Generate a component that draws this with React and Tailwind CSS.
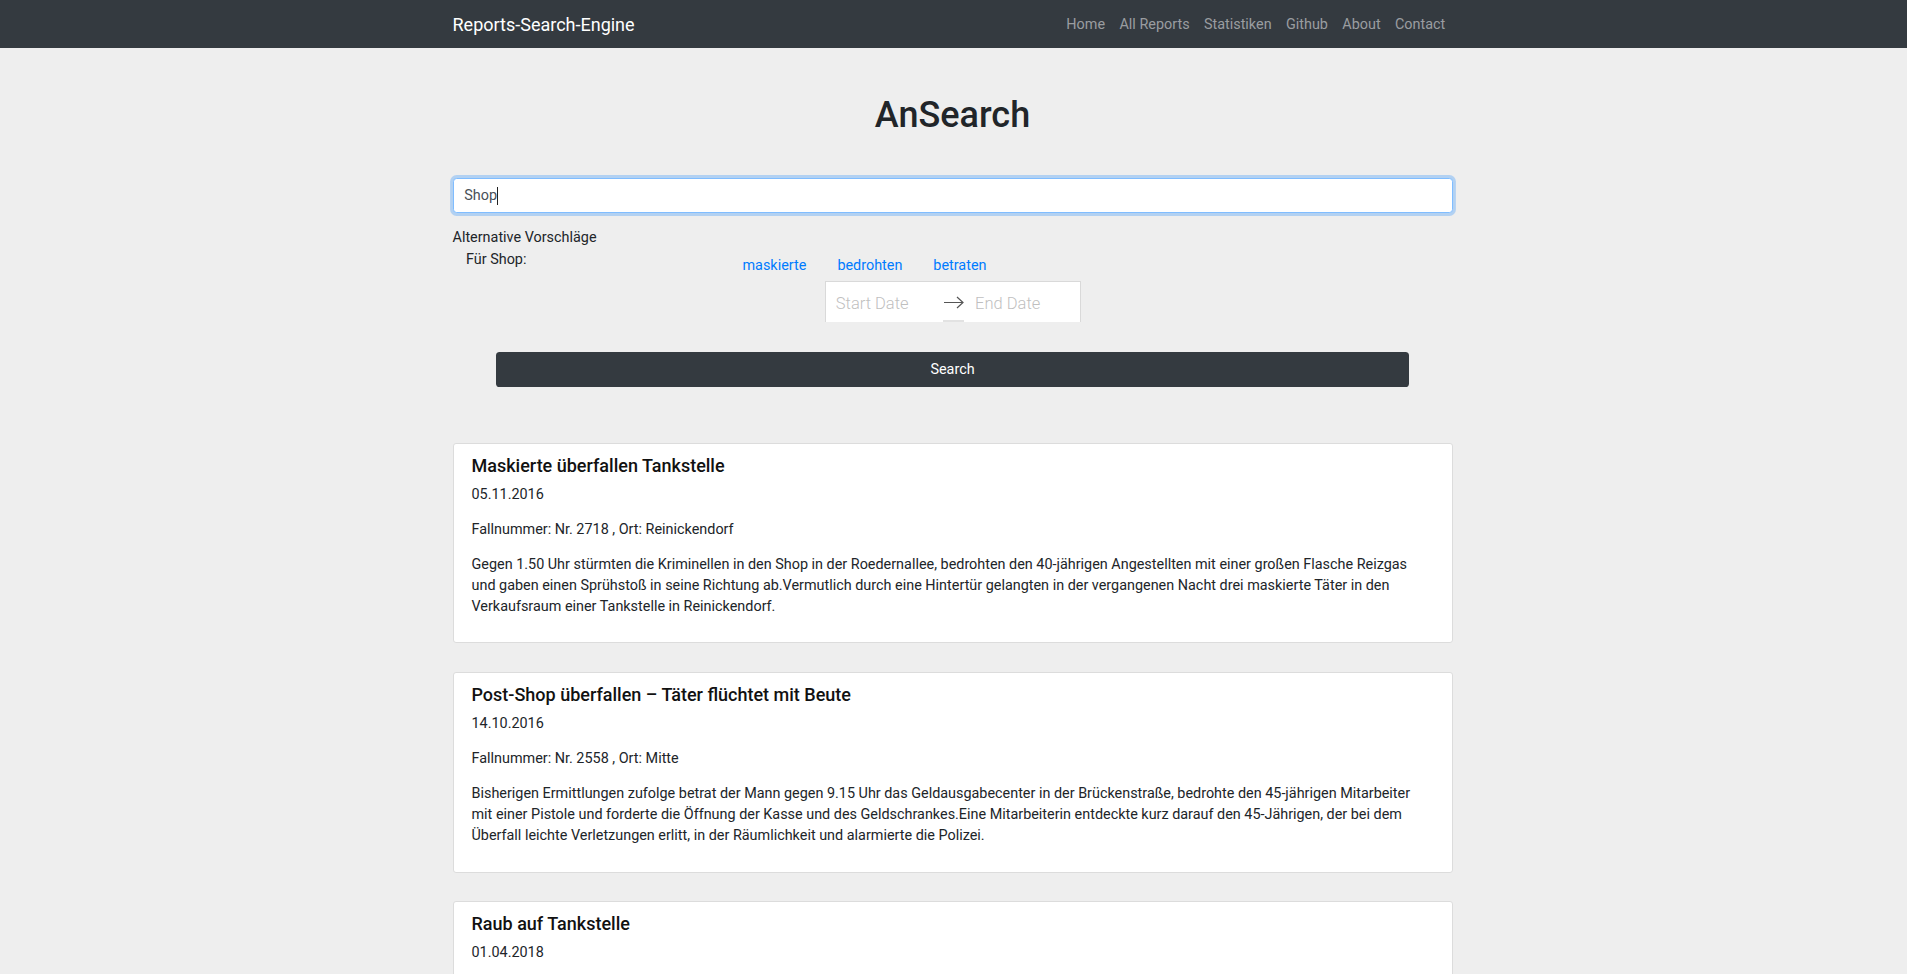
import React from "react";

const NAV_LINKS = ["Home", "All Reports", "Statistiken", "Github", "About", "Contact"];

const SUGGESTIONS = ["maskierte", "bedrohten", "betraten"];

const REPORTS = [
    {
        title: "Maskierte überfallen Tankstelle",
        date: "05.11.2016",
        meta: "Fallnummer: Nr. 2718 , Ort: Reinickendorf",
        text: "Gegen 1.50 Uhr stürmten die Kriminellen in den Shop in der Roedernallee, bedrohten den 40-jährigen Angestellten mit einer großen Flasche Reizgas und gaben einen Sprühstoß in seine Richtung ab.Vermutlich durch eine Hintertür gelangten in der vergangenen Nacht drei maskierte Täter in den Verkaufsraum einer Tankstelle in Reinickendorf."
    },
    {
        title: "Post-Shop überfallen – Täter flüchtet mit Beute",
        date: "14.10.2016",
        meta: "Fallnummer: Nr. 2558 , Ort: Mitte",
        text: "Bisherigen Ermittlungen zufolge betrat der Mann gegen 9.15 Uhr das Geldausgabecenter in der Brückenstraße, bedrohte den 45-jährigen Mitarbeiter mit einer Pistole und forderte die Öffnung der Kasse und des Geldschrankes.Eine Mitarbeiterin entdeckte kurz darauf den 45-Jährigen, der bei dem Überfall leichte Verletzungen erlitt, in der Räumlichkeit und alarmierte die Polizei."
    },
    {
        title: "Raub auf Tankstelle",
        date: "01.04.2018",
        meta: "",
        text: ""
    }
];

export default function App() {
    return (
        <div className="min-h-screen bg-[#eeeeee] text-[#212529] text-[14.4px] leading-[21.6px] font-['Roboto','Liberation_Sans',sans-serif]">

            {/* NAVBAR */}
            <nav className="h-12 bg-[#343a40]">
                <div className="w-[1002px] pr-[2px] mx-auto h-full flex items-center justify-between">
                    <a className="text-[18px] leading-normal text-white">
                        Reports-Search-Engine
                    </a>
                    <ul className="flex items-center pt-[2px]">
                        {NAV_LINKS.map(link => (
                            <li key={link} className="px-[7.2px] leading-normal text-[#9a9da0]">
                                {link}
                            </li>
                        ))}
                    </ul>
                </div>
            </nav>

            <main className="w-[1002px] pr-[2px] mx-auto pb-10">

                {/* HEADER */}
                <h1 className="mt-[46px] text-center text-[36px] leading-[43.2px] font-medium">
                    AnSearch
                </h1>

                {/* SEARCH INPUT */}
                <div className="mt-[41px] h-[34.6px] flex items-center px-[10.8px] bg-white border border-[#80bdff] rounded-[3.6px] shadow-[0_0_0_2.9px_rgba(0,123,255,0.25)] text-[#495057]">
                    <span>Shop</span>
                    <span className="w-px h-[18px] bg-[#222]" />
                </div>

                {/* SUGGESTIONS */}
                <div className="mt-[14.2px]">Alternative Vorschläge</div>
                <div className="flex items-start">
                    <div className="w-[290px] pl-[13.5px]">Für Shop:</div>
                    <div>
                        <div className="mt-[6.4px] flex gap-[31px] text-[#007bff]">
                            {SUGGESTIONS.map(s => (
                                <a key={s}>{s}</a>
                            ))}
                        </div>

                        {/* DATE RANGE */}
                        <div className="mt-[4.8px] ml-[82.3px] w-[256px] h-[40.6px] bg-white border-t border-x border-[#d9d9d9] relative flex items-center pt-[4px] pl-[10px] text-[16.5px] font-light text-[#bfbfbf]">
                            <span className="w-[108px]">Start Date</span>
                            <svg width="20" height="13" viewBox="0 0 20 13" className="text-[#555] -mt-[3px]">
                                <path d="M0 6.5h18.5M13 1l6 5.5-6 5.5" fill="none" stroke="currentColor" strokeWidth="1.2" />
                            </svg>
                            <span className="ml-[11.3px]">End Date</span>
                            <span className="absolute left-[117.5px] bottom-0 w-[21px] h-[2px] bg-[#e2e2e2]" />
                        </div>
                    </div>
                </div>

                <button className="mt-[30.4px] ml-[43.5px] w-[913px] h-[34.3px] bg-[#343a40] text-white rounded-[3.6px] block">
                    Search
                </button>

                {/* RESULTS */}
                <div className="mt-[56px] flex flex-col gap-[28.7px]">
                    {REPORTS.map(r => (
                        <ReportCard key={r.title} report={r} />
                    ))}
                </div>
            </main>
        </div>
    );
}

/* ====== UI ====== */

function ReportCard({ report }) {
    return (
        <div className="bg-white border border-[#dcdcdc] rounded-[3px] px-[18px] pt-[11px] pb-[11.2px]">
            <h5 className="text-[18px] leading-[21.6px] font-medium text-[#111]">
                {report.title}
            </h5>
            <div className="mt-[7.4px]">{report.date}</div>
            {report.meta && <p className="mt-[13.6px]">{report.meta}</p>}
            {report.text && <p className="mt-[13.4px] leading-[21px]">{report.text}</p>}
            <div className="h-[14.4px]" />
        </div>
    );
}
